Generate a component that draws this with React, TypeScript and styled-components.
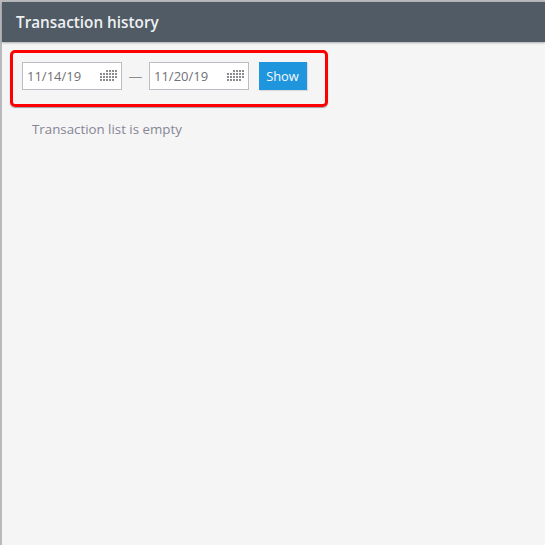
import styled, { createGlobalStyle } from 'styled-components';

const GlobalStyle = createGlobalStyle`
  html, body {
    margin: 0;
    padding: 0;
    background: #f5f5f5;
  }
  * {
    box-sizing: border-box;
  }
`;

const Page = styled.div`
  width: 545px;
  height: 545px;
  overflow: hidden;
  padding: 2px 0 0 2px;
  background: #f5f5f5;
  box-shadow: inset 2px 2px 0 #b9b9bd;
  font-family: 'Open Sans', sans-serif;
`;

const Header = styled.header`
  height: 40px;
  padding: 0 14px;
  display: flex;
  align-items: center;
  background: #505b65;
  box-shadow: 0 1px 2px rgba(0, 0, 0, 0.3);
  color: #eef0f2;
  font-size: 15.3px;
  font-weight: 600;
`;

const Highlight = styled.div`
  width: 318px;
  height: 57px;
  margin: 8px 0 0 8px;
  padding: 9px 9px;
  display: flex;
  align-items: flex-start;
  border: 3px solid #ff0000;
  border-radius: 5px;
  box-shadow: 0 1px 1px rgba(0, 0, 0, 0.35);
`;

const DateField = styled.div`
  width: 100px;
  height: 28px;
  padding: 0 3px 0 4px;
  display: flex;
  align-items: center;
  justify-content: space-between;
  background: #fff;
  border: 1px solid #bcbcc4;
  color: #707075;
  font-size: 13px;
`;

const Dash = styled.span`
  width: 27px;
  height: 28px;
  line-height: 27px;
  text-align: center;
  color: #3c3c40;
  font-size: 14px;
  font-weight: 300;
`;

const ShowButton = styled.button`
  width: 48px;
  height: 28px;
  margin-left: 10px;
  padding: 0 1px 1px 0;
  border: 0;
  background: #1e95dc;
  box-shadow: 1px 1px 1px rgba(0, 0, 0, 0.1);
  color: #f6fbfe;
  font-family: inherit;
  font-size: 12.9px;
  font-weight: 500;
`;

const EmptyText = styled.p`
  margin: 13px 0 0 30px;
  color: #868695;
  font-size: 13.3px;
`;

const ROWS = [
  [6, 4],
  [0, 6],
  [0, 6],
  [0, 5],
];

function CalendarDots() {
  return (
    <svg width="18" height="12" viewBox="0 0 18 12" fill="#8b8b90">
      {ROWS.flatMap(([start, count], row) =>
        Array.from({ length: count }, (_, i) => (
          <rect key={`${row}-${i}`} x={start + i * 3} y={row * 3} width="2" height="2" />
        )),
      )}
    </svg>
  );
}

export default function App() {
  return (
    <Page>
      <GlobalStyle />
      <Header>Transaction history</Header>
      <Highlight>
        <DateField>
          11/14/19
          <CalendarDots />
        </DateField>
        <Dash>—</Dash>
        <DateField>
          11/20/19
          <CalendarDots />
        </DateField>
        <ShowButton>Show</ShowButton>
      </Highlight>
      <EmptyText>Transaction list is empty</EmptyText>
    </Page>
  );
}
